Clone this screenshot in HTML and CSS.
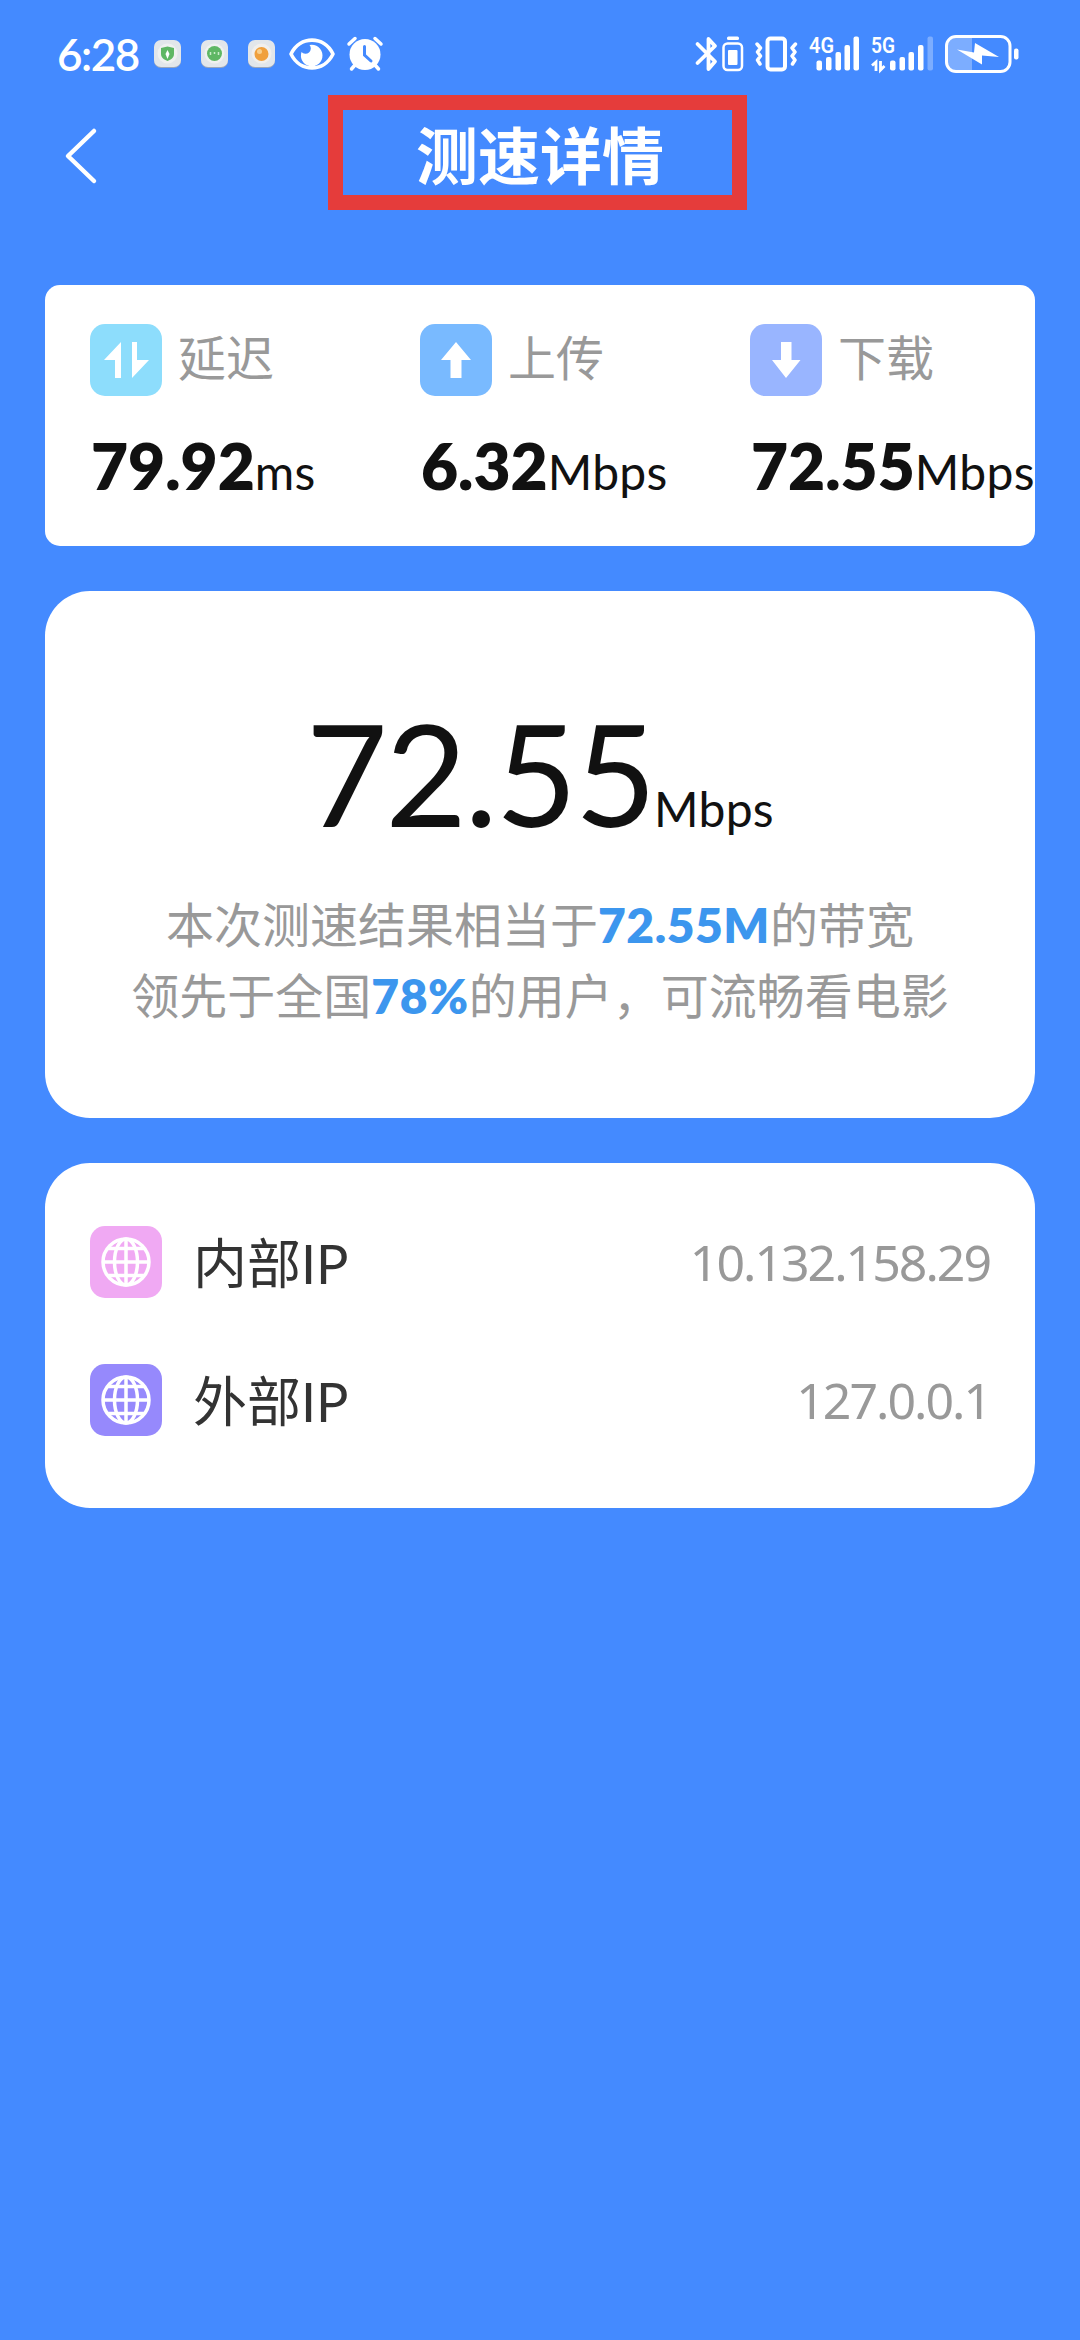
FILE: index.html
```
<!DOCTYPE html>
<html lang="zh-CN">
  <head>
    <meta charset="utf-8" />
    <title>测速详情</title>
    <meta name="viewport" content="width=device-width, initial-scale=1" />
    <link rel="stylesheet" href="styles.css">
  </head>
  <body>
    <div class="status-bar">
      <div class="status-left">
        <span class="time">6:28</span>
        <svg class="app" width="27" height="28" viewBox="0 0 27 28">
          <rect y="1" width="27" height="27" rx="7" fill="#9aa6bb" />
          <rect width="27" height="27" rx="7" fill="#e2e6ea" />
          <circle cx="13.500" cy="13.500" r="10" fill="#eff1f0" />
          <path d="M7 8 L13.500 6.500 L20 8 V14 C20 18 16 20 13.500 21 C11 20 7 18 7 14Z" fill="#5fb764" />
          <path d="M13.500 10 L15.500 14 L13.500 19 L11.500 14Z" fill="#fff" />
        </svg>
        <svg class="app" width="27" height="28" viewBox="0 0 27 28">
          <rect y="1" width="27" height="27" rx="7" fill="#9aa6bb" />
          <rect width="27" height="27" rx="7" fill="#e2e6ea" />
          <circle cx="13.500" cy="13.500" r="10" fill="#eff1f0" />
          <circle cx="13.500" cy="13.500" r="7.500" fill="#5fb764" />
          <path d="M9.500 12v3M13.500 12v2M17.500 12v3" stroke="#c9ecc9" stroke-width="1.500" />
        </svg>
        <svg class="app" width="27" height="28" viewBox="0 0 27 28">
          <rect y="1" width="27" height="27" rx="7" fill="#9aa6bb" />
          <rect width="27" height="27" rx="7" fill="#e2e6ea" />
          <circle cx="13.500" cy="13.500" r="10" fill="#f1efec" />
          <circle cx="13.500" cy="14" r="7" fill="#f0a03c" />
          <circle cx="11.500" cy="11.500" r="2.500" fill="#f9cf8c" />
        </svg>
        <svg class="eye" width="46" height="32" viewBox="0 0 46 32">
          <path d="M2 16 C11 -2.500 35 -2.500 44 16 C35 34.500 11 34.500 2 16Z" fill="none" stroke="#fff" stroke-width="3.600" stroke-linejoin="round" />
          <path d="M20.500 7 A10.800 10.800 0 1 1 12.500 14 A4.500 4.500 0 1 0 20.500 7Z" fill="#fff" />
        </svg>
        <svg class="alarm" width="36" height="36" viewBox="0 0 36 36">
          <path d="M2 8 L8 2.500 M28 2.500 L34 8 M8 29 L4.500 33 M28 29 L31.500 33" stroke="#fff" stroke-width="3.500" stroke-linecap="round" />
          <circle cx="18" cy="18.500" r="15.500" fill="#fff" />
          <path d="M17.500 10.500 V19 L24 25" fill="none" stroke="#448aff" stroke-width="3" stroke-linecap="round" />
        </svg>
      </div>
      <div class="status-right">
        <svg class="bluetooth" width="48" height="36" viewBox="0 0 48 36">
          <path d="M1.500 8 L19 25.500 L12.500 33 V3 L19 10 L1.500 27" fill="none" stroke="#fff" stroke-width="3.800" stroke-linejoin="round" stroke-linecap="round" />
          <rect x="31" y="0.500" width="12" height="3.500" rx="1.500" fill="#fff" />
          <rect x="27.500" y="7.500" width="18.500" height="26.500" rx="4" fill="none" stroke="#fff" stroke-width="2.500" />
          <rect x="32" y="14" width="9.500" height="15" rx="1" fill="#fff" />
        </svg>
        <svg class="vibrate" width="43" height="36" viewBox="0 0 43 36">
          <rect x="12.500" y="2.500" width="17.500" height="31" rx="3" fill="none" stroke="#fff" stroke-width="4" />
          <path d="M2 8 L5.500 12 L2.500 16 L5.500 20 L2.500 24 L5 28 M40.500 8 L37 12 L40 16 L37 20 L40 24 L37.500 28" fill="none" stroke="#fff" stroke-width="3.500" stroke-linecap="round" stroke-linejoin="round" />
        </svg>
        <svg class="signal-4g" width="51" height="36" viewBox="0 0 51 36">
          <text class="net" x="0" y="17" textLength="25" lengthAdjust="spacingAndGlyphs">4G</text>
          <g fill="#fff">
            <rect x="7.500" y="24.500" width="5.500" height="10" rx="2" />
            <rect x="17" y="21" width="5.500" height="13.500" rx="2" />
            <rect x="26.500" y="16" width="5.500" height="18.500" rx="2" />
            <rect x="35.500" y="9" width="5.500" height="25.500" rx="2" />
            <rect x="44.500" y="0.500" width="5.500" height="34" rx="2" />
          </g>
        </svg>
        <svg class="signal-5g" width="63" height="36" viewBox="0 0 63 36">
          <text class="net" x="0" y="17" textLength="24" lengthAdjust="spacingAndGlyphs">5G</text>
          <path d="M5 35 V26 L1 29.500 M9.500 25 V34 L13.500 30" fill="none" stroke="#fff" stroke-width="2.800" />
          <g fill="#fff">
            <rect x="19" y="24.500" width="5.500" height="10" rx="2" />
            <rect x="28.500" y="21" width="5.500" height="13.500" rx="2" />
            <rect x="37.500" y="16" width="5.500" height="18.500" rx="2" />
            <rect x="47" y="9" width="5.500" height="25.500" rx="2" />
            <rect x="56.500" y="0.500" width="5.500" height="34" rx="2" opacity="0.3" />
          </g>
        </svg>
        <svg class="battery" width="74" height="38" viewBox="0 0 74 38">
          <path d="M12 2 H27 V36 H12 A10 10 0 0 1 2 26 V12 A10 10 0 0 1 12 2Z" fill="#fff" opacity="0.3" />
          <rect x="1.500" y="1.500" width="63.500" height="35" rx="9.500" fill="none" stroke="#fff" stroke-width="3" />
          <rect x="69" y="13.500" width="4.500" height="11" rx="2" fill="#fff" />
          <path d="M12 14.500 L29 17.500 L30 8 L54 22 L37 20.500 V29.500Z" fill="#fff" />
        </svg>
      </div>
    </div>

    <header class="header">
      <svg class="back" width="34" height="56" viewBox="0 0 34 56">
        <path d="M30 3 L4 28 L30 53" fill="none" stroke="#fff" stroke-width="4.500" stroke-linecap="round" stroke-linejoin="round" />
      </svg>
      <h1 class="title">测速详情</h1>
      <div class="marker"></div>
    </header>

    <main class="content">
      <section class="card summary">
        <div class="item">
          <div class="item-head">
            <svg class="icon" viewBox="0 0 72 72">
              <rect width="72" height="72" rx="15" fill="#8dddfc" />
              <path d="M31 18 V54 H25 V36 H14Z M42 18 H47 V36 H59 L42 54Z" fill="#fff" />
            </svg>
            <span class="label">延迟</span>
          </div>
          <div class="value">79.92<span class="unit">ms</span></div>
        </div>
        <div class="item">
          <div class="item-head">
            <svg class="icon" viewBox="0 0 72 72">
              <rect width="72" height="72" rx="15" fill="#79baff" />
              <path d="M36 18 L51 36 H41.500 V54 H30.500 V36 H21Z" fill="#fff" />
            </svg>
            <span class="label">上传</span>
          </div>
          <div class="value">6.32<span class="unit">Mbps</span></div>
        </div>
        <div class="item">
          <div class="item-head">
            <svg class="icon" viewBox="0 0 72 72">
              <rect width="72" height="72" rx="15" fill="#99b5ff" />
              <path d="M36 54 L50.500 36 H41.500 V18 H31 V36 H22Z" fill="#fff" />
            </svg>
            <span class="label">下载</span>
          </div>
          <div class="value">72.55<span class="unit">Mbps</span></div>
        </div>
      </section>

      <section class="card result">
        <div class="speed">72.55<span class="unit">Mbps</span></div>
        <p class="desc">本次测速结果相当于<b>72.55M</b>的带宽</p>
        <p class="desc">领先于全国<b>78%</b>的用户，可流畅看电影</p>
      </section>

      <section class="card ip-list">
        <div class="ip-row">
          <svg class="icon" viewBox="0 0 72 72">
            <rect width="72" height="72" rx="15" fill="#f0a9f3" />
            <g fill="none" stroke="#fff" stroke-width="3.500">
              <circle cx="36" cy="36" r="23" />
              <ellipse cx="36" cy="36" rx="11.500" ry="23" />
              <path d="M36 13 V59 M13 36 H59 M17 22.500 H55 M17 49.500 H55" />
            </g>
          </svg>
          <span class="ip-name">内部IP</span>
          <span class="ip-value">10.132.158.29</span>
        </div>
        <div class="ip-row">
          <svg class="icon" viewBox="0 0 72 72">
            <rect width="72" height="72" rx="15" fill="#9689fc" />
            <g fill="none" stroke="#fff" stroke-width="3.500">
              <circle cx="36" cy="36" r="23" />
              <ellipse cx="36" cy="36" rx="11.500" ry="23" />
              <path d="M36 13 V59 M13 36 H59 M17 22.500 H55 M17 49.500 H55" />
            </g>
          </svg>
          <span class="ip-name">外部IP</span>
          <span class="ip-value">127.0.0.1</span>
        </div>
      </section>
    </main>
  </body>
</html>
```
FILE: styles.css
```
* {
  box-sizing: border-box;
}

body {
  margin: 0;
  min-height: 2340px;
  font-family: Lato, "Noto Sans CJK SC", sans-serif;
  background-color: #448aff;
  color: #111;
}

svg {
  display: block;
  flex-shrink: 0;
  overflow: visible;
}

/* status bar */
.status-bar {
  display: flex;
  justify-content: space-between;
  height: 107px;
  padding: 0 61px 0 57px;
  color: #fff;
}

.status-left,
.status-right {
  display: flex;
  align-items: center;
  height: 107px;
}

.time {
  width: 97px;
  font-size: 44px;
  font-weight: 600;
  letter-spacing: -1.5px;
}

.app {
  margin-right: 20px;
}

.eye {
  margin: 0 12px 0 -6px;
}

.bluetooth {
  margin-right: 11px;
}

.vibrate {
  margin-right: 11px;
}

.signal-4g {
  margin-right: 11px;
}

.signal-5g {
  margin-right: 11px;
}

.net {
  font-family: Roboto, sans-serif;
  font-size: 22px;
  font-weight: 600;
  fill: #fff;
}

/* header */
.header {
  position: relative;
  display: flex;
  align-items: center;
  justify-content: center;
  height: 98px;
}

.back {
  position: absolute;
  left: 64px;
  top: 21px;
}

.title {
  margin: 0;
  font-size: 62px;
  font-weight: 700;
  line-height: 100px;
  color: #fff;
}

.marker {
  position: absolute;
  left: 328px;
  top: -12px;
  width: 419px;
  height: 115px;
  border: 15px solid #e53c3b;
}

/* cards */
.content {
  display: flex;
  flex-direction: column;
  gap: 45px;
  padding: 80px 45px 0;
}

.card {
  background-color: #fff;
  border-radius: 45px;
}

.icon {
  width: 72px;
  height: 72px;
}

.unit {
  font-size: 48px;
  font-weight: 400;
  letter-spacing: 0.3px;
}

.summary {
  display: grid;
  grid-template-columns: repeat(3, 330px);
  height: 261px;
  padding-top: 39px;
  border-radius: 15px;
  overflow: hidden;
}

.item {
  padding-left: 45px;
}

.item-head {
  display: flex;
  align-items: center;
  gap: 16px;
  height: 72px;
}

.label {
  padding-bottom: 4px;
  font-size: 48px;
  line-height: 72px;
  color: #999;
}

.value {
  margin-top: 30px;
  padding-left: 1px;
  font-size: 64px;
  font-weight: 800;
  line-height: 80px;
  white-space: nowrap;
}

.result {
  height: 527px;
  padding-top: 114px;
  text-align: center;
}

.speed {
  font-size: 141px;
  line-height: 136px;
  letter-spacing: -2.5px;
}

.desc {
  margin: 0;
  font-size: 48px;
  line-height: 71px;
  color: #999;
}

.desc b {
  font-weight: 800;
  letter-spacing: 0.5px;
  color: #3c96ee;
}

.speed + .desc {
  margin-top: 12px;
}

.ip-list {
  display: flex;
  flex-direction: column;
  gap: 66px;
  height: 345px;
  padding: 63px 45px 0;
}

.ip-row {
  display: flex;
  align-items: center;
  height: 72px;
}

.ip-name {
  margin-left: 31px;
  padding-top: 3px;
  font-size: 54px;
  line-height: 72px;
  color: #333;
}

.ip-value {
  margin-left: auto;
  font-family: "Noto Sans", sans-serif;
  font-size: 50px;
  line-height: 72px;
  letter-spacing: -2px;
  color: #999;
}
```
